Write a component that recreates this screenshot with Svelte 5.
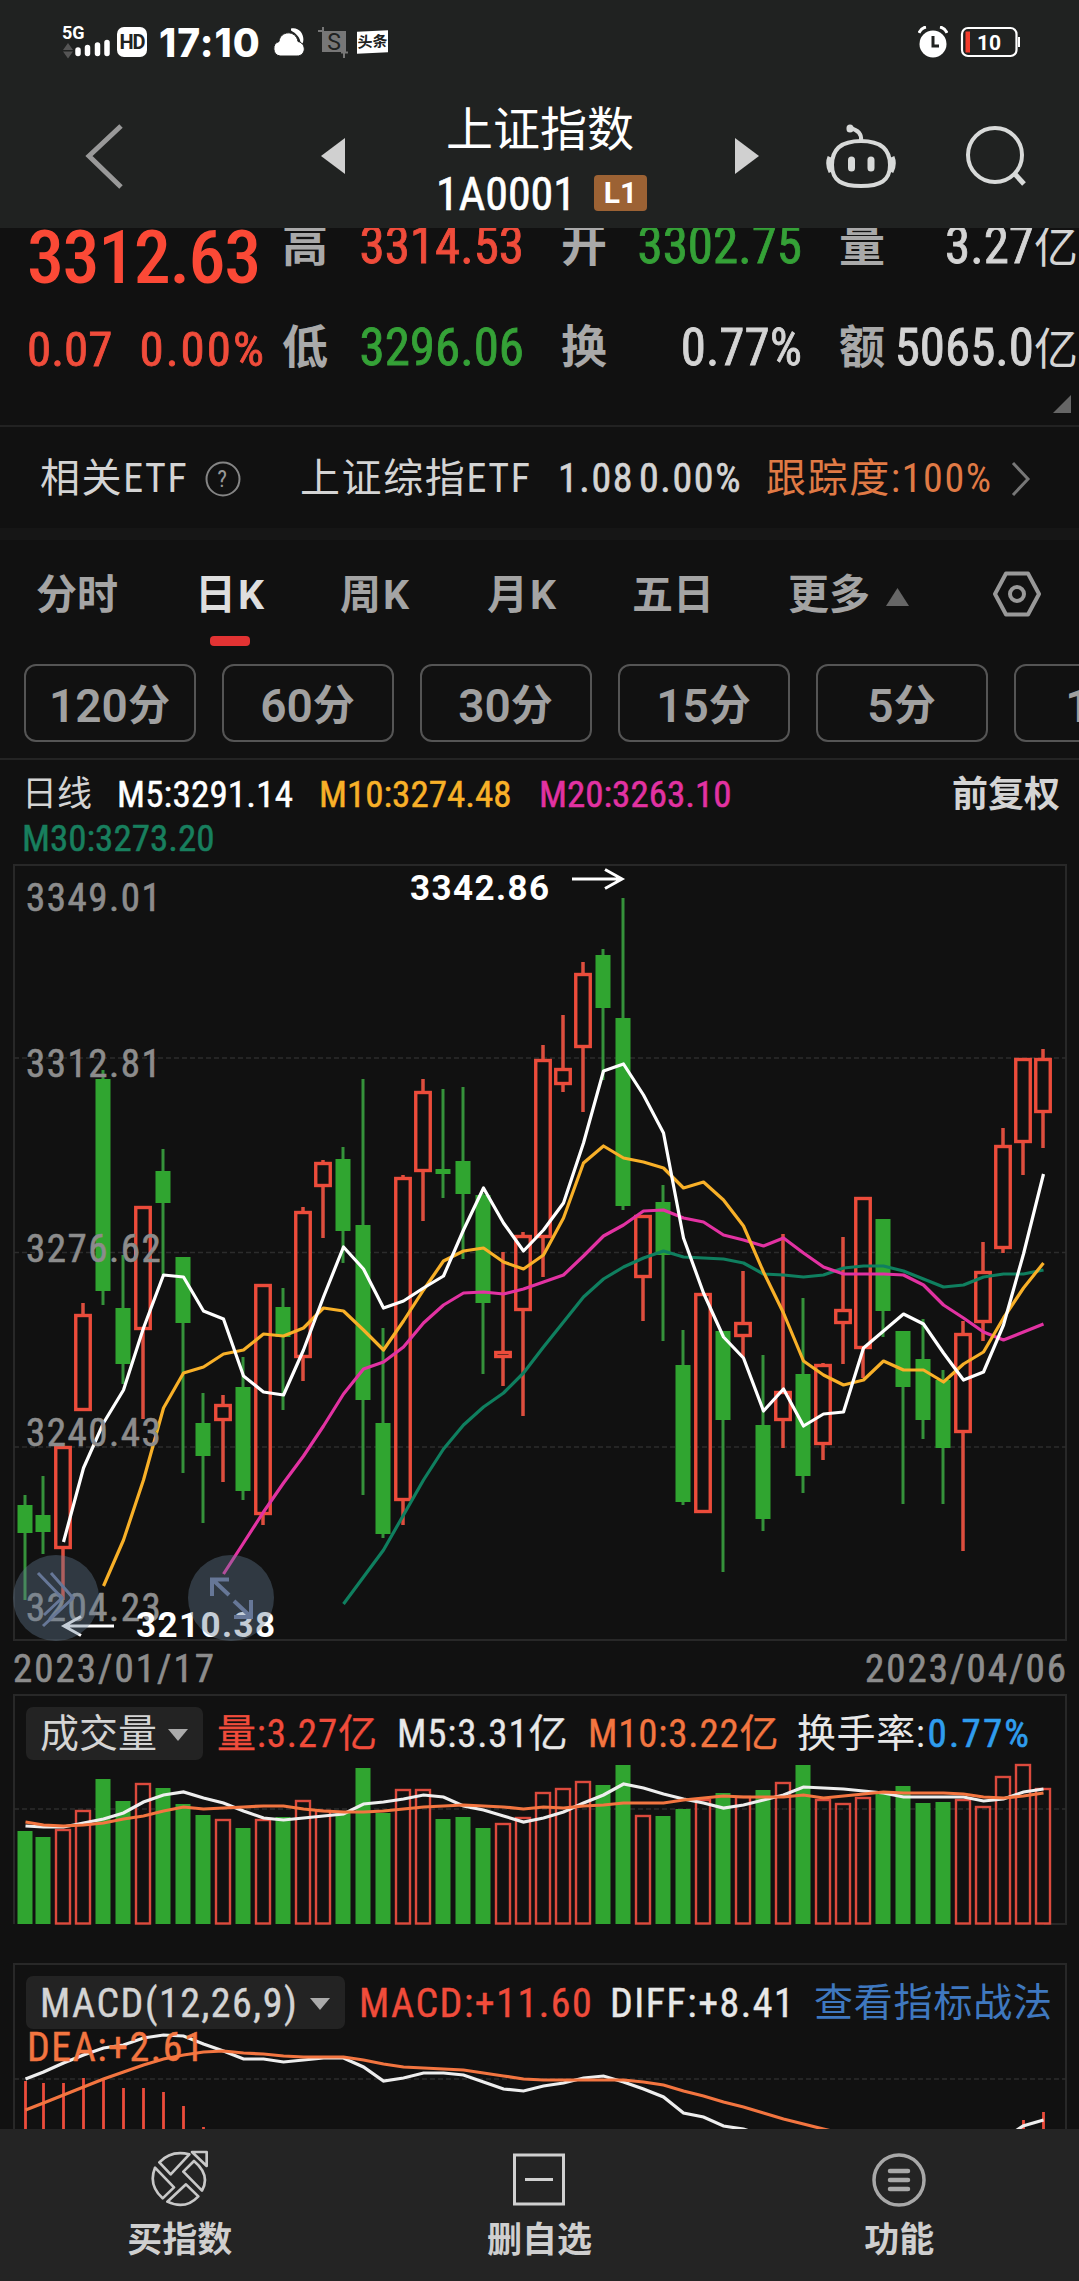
<script>
  const tabs = [
    { name: '分时' },
    { name: '日', k: true, active: true },
    { name: '周', k: true },
    { name: '月', k: true },
    { name: '五日' }
  ];
  const periods = ['120', '60', '30', '15', '5', '1'];

  // [rising, high, body top, body bottom, low]
  const candles = [
    [0, 1495, 1505, 1533, 1600], [0, 1476, 1515, 1532, 1554], [1, 1446, 1446, 1549, 1600],
    [1, 1303, 1314, 1411, 1411], [0, 1070, 1079, 1291, 1305], [0, 1255, 1308, 1364, 1384],
    [1, 1206, 1206, 1330, 1419], [0, 1149, 1171, 1203, 1275], [0, 1257, 1257, 1323, 1473],
    [0, 1393, 1423, 1456, 1523], [1, 1395, 1404, 1421, 1482], [0, 1357, 1387, 1491, 1500],
    [1, 1284, 1284, 1515, 1525], [0, 1288, 1307, 1337, 1410], [1, 1207, 1211, 1358, 1381],
    [1, 1160, 1162, 1187, 1238], [0, 1147, 1159, 1231, 1263], [0, 1079, 1225, 1400, 1495],
    [0, 1328, 1423, 1534, 1538], [1, 1175, 1177, 1501, 1525], [1, 1079, 1091, 1172, 1221],
    [0, 1089, 1169, 1174, 1198], [0, 1087, 1161, 1194, 1259], [0, 1193, 1195, 1303, 1374],
    [1, 1252, 1351, 1358, 1386], [1, 1232, 1235, 1311, 1416], [1, 1045, 1059, 1238, 1277],
    [1, 1015, 1068, 1085, 1092], [1, 962, 973, 1048, 1112], [0, 949, 955, 1008, 1080],
    [0, 898, 1018, 1206, 1210], [1, 1215, 1215, 1278, 1321], [0, 1185, 1202, 1255, 1341],
    [0, 1330, 1365, 1502, 1505], [1, 1293, 1293, 1513, 1513], [0, 1331, 1331, 1420, 1572],
    [1, 1271, 1322, 1337, 1357], [0, 1355, 1425, 1519, 1531], [1, 1234, 1391, 1421, 1448],
    [0, 1298, 1374, 1476, 1493], [1, 1363, 1364, 1445, 1460], [1, 1237, 1309, 1324, 1364],
    [1, 1197, 1197, 1349, 1378], [0, 1219, 1219, 1311, 1337], [0, 1331, 1331, 1387, 1504],
    [0, 1319, 1359, 1420, 1439], [0, 1370, 1380, 1448, 1504], [1, 1321, 1333, 1433, 1551],
    [1, 1242, 1271, 1323, 1341], [1, 1128, 1145, 1249, 1253], [1, 1058, 1058, 1143, 1175],
    [1, 1049, 1058, 1113, 1148]
  ];

  const averages = [
    { color: '#0f7f5f', start: 16, ys: [1604, 1577, 1550, 1515, 1480, 1449, 1425, 1407, 1393, 1373, 1347, 1322, 1297, 1279, 1267, 1258, 1251, 1257, 1258, 1259, 1263, 1274, 1275, 1277, 1275, 1268, 1266, 1266, 1271, 1279, 1287, 1285, 1277, 1274, 1274, 1270] },
    { color: '#e232a2', start: 10, ys: [1574, 1543, 1512, 1483, 1456, 1426, 1394, 1369, 1362, 1347, 1323, 1305, 1293, 1292, 1294, 1289, 1282, 1275, 1256, 1236, 1225, 1211, 1210, 1218, 1222, 1235, 1240, 1246, 1238, 1253, 1267, 1274, 1274, 1274, 1275, 1285, 1305, 1318, 1332, 1340, 1332, 1324] },
    { color: '#f8b028', start: 4, ys: [1586, 1540, 1480, 1408, 1373, 1367, 1354, 1350, 1334, 1336, 1328, 1308, 1311, 1330, 1350, 1321, 1290, 1261, 1251, 1248, 1262, 1269, 1255, 1218, 1163, 1146, 1158, 1162, 1168, 1188, 1182, 1200, 1226, 1272, 1313, 1361, 1375, 1385, 1380, 1361, 1370, 1370, 1382, 1364, 1352, 1318, 1288, 1263] },
    { color: '#ffffff', start: 2, ys: [1542, 1468, 1423, 1390, 1328, 1275, 1277, 1311, 1319, 1376, 1392, 1395, 1350, 1297, 1247, 1269, 1308, 1301, 1288, 1276, 1230, 1188, 1223, 1251, 1230, 1203, 1143, 1071, 1064, 1095, 1133, 1238, 1293, 1337, 1358, 1411, 1389, 1426, 1414, 1412, 1348, 1331, 1314, 1324, 1353, 1380, 1372, 1325, 1254, 1174] }
  ];

  const volumes = [1831, 1837, 1830, 1811, 1779, 1801, 1784, 1788, 1804, 1815, 1820, 1828, 1820, 1817, 1801, 1811, 1813, 1768, 1813, 1790, 1790, 1819, 1817, 1828, 1824, 1818, 1793, 1789, 1782, 1785, 1765, 1816, 1816, 1809, 1800, 1793, 1797, 1790, 1783, 1765, 1800, 1804, 1798, 1793, 1786, 1803, 1802, 1800, 1807, 1777, 1765, 1789];
  const volumeMa5 = [1826, 1827, 1827, 1823, 1819, 1813, 1802, 1795, 1792, 1798, 1803, 1811, 1818, 1820, 1818, 1816, 1814, 1804, 1802, 1799, 1795, 1797, 1806, 1810, 1816, 1822, 1818, 1812, 1803, 1795, 1784, 1788, 1794, 1799, 1803, 1808, 1805, 1800, 1795, 1787, 1788, 1789, 1791, 1793, 1797, 1797, 1797, 1797, 1801, 1799, 1792, 1789];
  const volumeMa10 = [1822, 1825, 1826, 1825, 1823, 1819, 1816, 1811, 1807, 1809, 1808, 1807, 1806, 1806, 1809, 1811, 1812, 1812, 1811, 1809, 1807, 1806, 1805, 1806, 1807, 1809, 1807, 1808, 1806, 1805, 1803, 1803, 1803, 1800, 1798, 1796, 1797, 1797, 1797, 1795, 1798, 1796, 1794, 1792, 1793, 1793, 1793, 1794, 1797, 1798, 1796, 1793];

  const macdBars = [[0, 2081], [1, 2083], [2, 2083], [3, 2078], [4, 2078], [5, 2088], [6, 2088], [7, 2092], [8, 2106], [9, 2127], [50, 2120], [51, 2112]];
  const diff = [2079, 2072, 2063, 2055, 2048, 2045, 2038, 2035, 2036, 2044, 2051, 2059, 2059, 2062, 2060, 2058, 2058, 2067, 2081, 2078, 2073, 2073, 2075, 2082, 2089, 2091, 2086, 2083, 2078, 2076, 2082, 2089, 2097, 2113, 2117, 2126, 2129, 2136];
  const dea = [2110, 2103, 2095, 2087, 2079, 2072, 2065, 2059, 2055, 2052, 2051, 2053, 2054, 2056, 2057, 2057, 2057, 2060, 2064, 2067, 2068, 2069, 2070, 2073, 2076, 2079, 2080, 2080, 2080, 2080, 2080, 2082, 2085, 2091, 2096, 2102, 2107, 2113, 2119, 2124, 2129, 2134];

  const x = (i) => (i === 0 ? 25 : 23 + 20 * i);
  const line = (ys, start = 0) => ys.map((y, i) => `${x(i + start) + 0.5},${y}`).join(' ');
</script>

{#snippet caret()}
  <svg class="caret" width="20" height="12" viewBox="0 0 20 12"><path d="M0 0h20L10 12z" fill="#aaa" /></svg>
{/snippet}

<div class="screen">
  <header>
    <div class="status">
      <svg class="signal" width="48" height="34" viewBox="63 25 48 34">
        <text x="62" y="39" font-size="18" font-weight="700" fill="#fff">5G</text>
        <path d="M63 50l5-7 5 7zM63 51.500h10l-5 7z" fill="#555" />
        <g stroke="#fff" stroke-width="5.500" stroke-linecap="round">
          <path d="M78 50v3.500M87.500 47.500v6M97.500 45v8.500M107 42.500v11" />
        </g>
      </svg>
      <span class="hd">HD</span>
      <span class="clock">17:10</span>
      <svg class="cloud" width="32" height="30" viewBox="272 27 32 30">
        <path d="M290 28.500c8-2 14 6 12 14l-2 2c-1-8-5-11-10-14z" fill="#fff" />
        <path d="M279 56a7.500 7.500 0 0 1-1-14.500c1-11 17-12 19 0 9 2 8 14.500-1 14.500z" fill="#fff" stroke="#202221" stroke-width="1" />
      </svg>
      <svg class="crop" width="30" height="32" viewBox="317 26 30 32">
        <path d="M321 31h24v21h-24z" fill="#777" />
        <path d="M317 31h6M322 27v6M343 50v8M340 52.500h8" stroke="#777" stroke-width="2" />
        <text x="333" y="50" text-anchor="middle" font-size="23" fill="#202221">S</text>
      </svg>
      <span class="news">头条</span>
      <svg class="alarm" width="30" height="32" viewBox="918 26 30 32">
        <circle cx="933" cy="44" r="13.500" fill="#fff" />
        <path d="M919 33q2-5 7-6M947 33q-2-5-7-6" stroke="#fff" stroke-width="3" fill="none" />
        <path d="M933 36v10h6" stroke="#202221" stroke-width="3" fill="none" />
      </svg>
      <svg class="battery" width="60" height="32" viewBox="959 26 60 32">
        <rect x="961" y="28" width="54.500" height="28" rx="6" fill="none" stroke="#fff" stroke-width="2.200" />
        <path d="M964.500 31.500h4.500v21h-4.500z" fill="#f23c2c" />
        <path d="M1018 37v10" stroke="#fff" stroke-width="2" />
        <text x="988" y="49.500" text-anchor="middle" font-size="21" font-weight="700" fill="#fff">10</text>
      </svg>
    </div>
    <nav>
      <svg class="back" width="44" height="66" viewBox="82 123 44 66">
        <path d="M121 126L89 156l32 31" fill="none" stroke="#999" stroke-width="5" />
      </svg>
      <svg width="24" height="36" viewBox="0 0 24 36"><path d="M24 0v36L0 18z" fill="#d0d0d0" /></svg>
      <div class="title">
        <h1>上证指数</h1>
        <p><span>1A0001</span><b>L1</b></p>
      </div>
      <svg width="24" height="36" viewBox="0 0 24 36"><path d="M0 0v36l24-18z" fill="#d0d0d0" /></svg>
      <svg class="robot" width="72" height="66" viewBox="825 121 72 66">
        <g fill="none" stroke="#d8dad9" stroke-width="4">
          <path d="M861 139c21 0 29 9 29 24 0 16-10 21-29 21s-29-5-29-21c0-15 8-24 29-24z" />
          <path d="M861 138q1-9-11-12" stroke-linecap="round" />
          <path d="M850 126v1" stroke-linecap="round" stroke-width="7" />
          <path d="M830 155q-3 7 1 15M892 155q3 7-1 15" stroke-width="5" />
          <path d="M851.500 158v8M871 158v8" stroke-width="7" stroke-linecap="round" />
        </g>
      </svg>
      <svg class="search" width="62" height="64" viewBox="965 124 62 64">
        <circle cx="995" cy="155" r="27" fill="none" stroke="#d8dad9" stroke-width="4" />
        <path d="M1014 173l10 11" stroke="#d8dad9" stroke-width="5" />
      </svg>
    </nav>
  </header>

  <section class="quote">
    <div class="quote-grid">
      <strong>3312.63</strong>
      <div class="cell up"><label>高</label><span>3314.53</span></div>
      <div class="cell down"><label>开</label><span>3302.75</span></div>
      <div class="cell"><label>量</label><span>3.27<i>亿</i></span></div>
      <div class="change"><span>0.07</span><span class="percent">0.00%</span></div>
      <div class="cell down"><label>低</label><span>3296.06</span></div>
      <div class="cell"><label>换</label><span>0.77%</span></div>
      <div class="cell"><label>额</label><span>5065.0<i>亿</i></span></div>
    </div>
    <svg class="corner" width="18" height="18" viewBox="0 0 18 18"><path d="M18 0v18H0z" fill="#666" /></svg>
  </section>

  <section class="etf">
    <span class="etf-label">相关ETF</span>
    <svg class="help" width="38" height="38" viewBox="0 0 38 38">
      <circle cx="19" cy="19" r="16.500" fill="none" stroke="#858585" stroke-width="2" />
      <text x="19" y="27" text-anchor="middle" font-size="23" fill="#999">?</text>
    </svg>
    <span class="etf-name">上证综指ETF</span>
    <span class="etf-price">1.08</span>
    <span class="etf-rate">0.00%</span>
    <span class="track">跟踪度:100%</span>
    <svg class="more" width="20" height="36" viewBox="0 0 20 36"><path d="M2 2l15 16L2 34" fill="none" stroke="#777" stroke-width="3" /></svg>
  </section>

  <section class="tabs">
    {#each tabs as tab}
      <span class="tab" class:active={tab.active}>{tab.name}{#if tab.k}<i class="k">K</i>{/if}</span>
    {/each}
    <span class="tab extra">更多<svg width="23" height="18" viewBox="0 0 23 18"><path d="M11.500 0L23 18H0z" fill="#666" /></svg></span>
    <svg class="settings" width="50" height="48" viewBox="0 0 50 48">
      <path d="M14 3.500h22L47 24 36 44.500H14L3 24z" fill="none" stroke="#999" stroke-width="4" stroke-linejoin="round" />
      <circle cx="25" cy="24" r="7" fill="none" stroke="#999" stroke-width="4" />
    </svg>
  </section>

  <section class="periods">
    {#each periods as p}
      <span class="chip">{p}<i>分</i></span>
    {/each}
  </section>

  <section class="legend">
    <span class="kind">日线</span>
    <span class="m5">M5:3291.14</span>
    <span class="m10">M10:3274.48</span>
    <span class="m20">M20:3263.10</span>
    <span class="adjust">前复权</span>
    <span class="m30">M30:3273.20</span>
  </section>

  <svg class="price" width="1079" height="785" viewBox="0 860 1079 785">
    <rect x="14" y="865" width="1052" height="775" fill="none" stroke="#282828" stroke-width="2" />
    <path d="M14 1058H1066M14 1252.500H1066M14 1447H1066" stroke="#2c2c2c" stroke-width="1.500" stroke-dasharray="5 3" />
    {#each candles as [up, high, top, bottom, low], i}
      <path d="M{x(i)} {high}V{top}M{x(i)} {bottom}V{low}" stroke={up ? '#dd4e3e' : '#35923a'} stroke-width={up ? 3.5 : 3} />
      {#if up}
        <rect x={x(i) - 7.25} y={top + 1.5} width="14.500" height={bottom - top - 3} fill="none" stroke="#ec4c3b" stroke-width="3.400" />
      {:else}
        <rect x={x(i) - 7.5} y={top} width="15" height={bottom - top} fill="#30a530" />
      {/if}
    {/each}
    {#each averages as ma}
      <polyline points={line(ma.ys, ma.start)} fill="none" stroke={ma.color} stroke-width="3.200" stroke-linejoin="round" />
    {/each}
    <g class="scale">
      <text x="26" y="911">3349.01</text>
      <text x="26" y="1077">3312.81</text>
      <text x="26" y="1262">3276.62</text>
      <text x="26" y="1446">3240.43</text>
      <text x="26" y="1621">3204.23</text>
    </g>
    <g class="peak">
      <text x="410" y="900">3342.86</text>
      <text x="136" y="1637">3210.38</text>
      <path d="M572 879h50M605 869.500l17 9.500-17 9.500M114 1626H64M81 1616.500L64 1626l17 9.500" />
    </g>
    <circle cx="56" cy="1598" r="43" fill="#637c92" fill-opacity=".38" />
    <circle cx="231" cy="1598" r="43" fill="#637c92" fill-opacity=".38" />
    <g fill="none" stroke="#667797" stroke-width="3">
      <path d="M38 1573l24 25-18 17M51 1573l22 25-30 28" />
      <path d="M229 1579.500H212V1596M213 1580l16 15M251 1600v17h-17M250 1616l-16-15" stroke-width="4" />
    </g>
  </svg>
  <div class="dates"><span>2023/01/17</span><span>2023/04/06</span></div>

  <section class="panel volume">
    <svg class="plot" width="1079" height="231" viewBox="0 1694 1079 231">
      <path d="M14 1924V1695H1066V1924H1044" fill="none" stroke="#282828" stroke-width="2" />
      <path d="M14 1809H1066" stroke="#2c2c2c" stroke-width="1.500" stroke-dasharray="5 3" />
      {#each volumes as top, i}
        {#if candles[i][0]}
          <rect x={x(i) - 7} y={top} width="14" height={1923.5 - top} fill="none" stroke="#dc4a3d" stroke-width="2.400" />
        {:else}
          <rect x={x(i) - 7.5} y={top} width="15" height={1924 - top} fill="#30a530" />
        {/if}
      {/each}
      <polyline points={line(volumeMa5)} fill="none" stroke="#eee" stroke-width="3.200" />
      <polyline points={line(volumeMa10)} fill="none" stroke="#f37540" stroke-width="3.200" />
    </svg>
    <div class="indicators">
      <span class="picker">成交量{@render caret()}</span>
      <span class="red v1">量:3.27亿</span>
      <span class="v2">M5:3.31亿</span>
      <span class="orange v3">M10:3.22亿</span>
      <span class="v4">换手率:<em>0.77%</em></span>
    </div>
  </section>

  <section class="panel macd">
    <svg class="plot" width="1079" height="166" viewBox="0 1963 1079 166">
      <path d="M14 2140V1964H1066V2140" fill="none" stroke="#282828" stroke-width="2" />
      <path d="M14 2079H1066" stroke="#2c2c2c" stroke-width="1.500" stroke-dasharray="5 3" />
      {#each macdBars as [i, top]}
        <path d="M{x(i) + 0.5} {top}V2140" stroke="#ec4c3b" stroke-width="2.800" />
      {/each}
      <polyline points={line(diff)} fill="none" stroke="#eee" stroke-width="3.200" />
      <path d="M1014 2132L1023 2126 1043.500 2120" fill="none" stroke="#eee" stroke-width="3.200" />
      <polyline points={line(dea)} fill="none" stroke="#f37540" stroke-width="3.200" />
    </svg>
    <div class="indicators">
      <span class="picker">MACD(12,26,9){@render caret()}</span>
      <span class="red d1">MACD:+11.60</span>
      <span class="d2">DIFF:+8.41</span>
      <span class="link">查看指标战法</span>
    </div>
    <div class="orange dea">DEA:+2.61</div>
  </section>

  <footer>
    <div class="action">
      <svg width="60" height="60" viewBox="60 32 180 180">
        <g fill="none" stroke="#c8c8c8" stroke-width="8" stroke-linejoin="round">
          <path d="M88 72Q124 34 178 48L122 108zM192 68L160 100l56 57Q242 110 192 68zM168 138L112 190Q166 216 205 174zM75 88Q54 140 98 180L132 147z" />
          <path d="M186 41h44v42z" />
        </g>
      </svg>
      <span>买指数</span>
    </div>
    <div class="action">
      <svg width="60" height="60" viewBox="0 0 60 60">
        <path d="M5.500 6h49v49h-49zM16 30.500h28" fill="none" stroke="#d0d0d0" stroke-width="3" />
      </svg>
      <span>删自选</span>
    </div>
    <div class="action">
      <svg width="60" height="60" viewBox="0 0 60 60">
        <circle cx="30" cy="31" r="25" fill="none" stroke="#a8a8a8" stroke-width="3.500" />
        <path d="M21 22h18M21 31h18M21 40h18" stroke="#a8a8a8" stroke-width="4.500" stroke-linecap="round" />
      </svg>
      <span>功能</span>
    </div>
  </footer>
</div>

<style>
  :global(body) {
    background: #111;
  }
  .screen {
    width: 1079px;
    height: 2281px;
    overflow: hidden;
    display: flex;
    flex-direction: column;
    background: #111;
    color: #d4d4d4;
    font-family: 'Roboto Condensed', 'Noto Sans CJK SC', sans-serif;
    line-height: 1;
    white-space: nowrap;
  }
  .screen > :global(*) {
    flex: none;
  }
  i,
  em {
    font-style: normal;
  }
  header {
    height: 228px;
    background: #202221;
    color: #fff;
  }
  .status {
    height: 84px;
    display: flex;
    align-items: center;
    padding: 0 59px 0 63px;
    box-sizing: border-box;
  }
  .status text {
    font-family: Roboto, sans-serif;
  }
  .signal {
    overflow: visible;
  }
  .hd {
    width: 30px;
    height: 30px;
    margin-left: 6px;
    border-radius: 7px;
    background: #fff;
    color: #202221;
    font: 700 20px/30px Roboto, sans-serif;
    text-align: center;
    letter-spacing: -1px;
  }
  .clock {
    width: 103px;
    margin-left: 12px;
    font: 800 39px/1 Inter, sans-serif;
    letter-spacing: 1px;
  }
  .cloud {
    margin-left: 11px;
  }
  .crop {
    margin-left: 13px;
  }
  .news {
    margin-left: 9px;
    width: 31px;
    height: 22px;
    background: #fff;
    color: #202221;
    font-size: 15px;
    font-weight: 700;
    line-height: 22px;
    text-align: center;
    transform: skewY(-3deg);
  }
  .alarm {
    margin-left: auto;
  }
  .battery {
    margin-left: 12px;
  }
  nav {
    height: 144px;
    display: flex;
    align-items: center;
    padding-left: 82px;
  }
  .back {
    margin-right: 195px;
  }
  .title {
    width: 390px;
    text-align: center;
  }
  h1 {
    margin: 0;
    padding-top: 11px;
    font-size: 47px;
    font-weight: 400;
    line-height: 62px;
  }
  .title p {
    margin: 0;
    display: flex;
    justify-content: center;
    align-items: center;
    gap: 18px;
    padding-left: 3px;
    font-size: 46px;
    line-height: 62px;
  }
  .title p span {
    padding-top: 2px;
    -webkit-text-stroke: 0.6px;
  }
  .title b {
    width: 53px;
    background: #9c6234;
    border-radius: 4px;
    font: 700 30px/36px Roboto, sans-serif;
  }
  .robot {
    margin-left: 66px;
  }
  .search {
    margin-left: 68px;
  }
  .quote {
    height: 199px;
    box-sizing: border-box;
    border-bottom: 2px solid #222;
    overflow: hidden;
    position: relative;
  }
  .quote-grid {
    display: grid;
    grid-template-columns: 255px 279px 278px 239px;
    grid-auto-rows: 102px;
    align-items: center;
    margin-top: -34px;
    padding-left: 27px;
    font-size: 51px;
  }
  .quote-grid strong {
    padding-top: 25px;
    font-size: 74px;
    font-weight: 500;
    color: #fb4936;
    letter-spacing: -1.4px;
  }
  .cell {
    display: flex;
    justify-content: space-between;
    align-items: center;
    margin-right: 37px;
  }
  .cell:nth-child(4n) {
    margin-right: 0;
  }
  .cell span,
  .change {
    -webkit-text-stroke: 0.8px;
  }
  .cell label {
    font-size: 46px;
    font-weight: 700;
    color: #a9a9a9;
  }
  .cell i {
    font-size: 44px;
    -webkit-text-stroke: 0;
  }
  .up {
    color: #f04c3b;
  }
  .down {
    color: #35a137;
  }
  .change {
    display: flex;
    gap: 27px;
    padding-top: 5px;
    font-size: 49px;
    color: #f04c3b;
  }
  .percent {
    letter-spacing: 2px;
  }
  .corner {
    position: absolute;
    right: 8px;
    bottom: 12px;
  }
  .etf {
    height: 113px;
    box-sizing: border-box;
    border-bottom: 12px solid #161616;
    display: flex;
    align-items: center;
    padding: 2px 0 0 40px;
    font-size: 40px;
    letter-spacing: 1.6px;
  }
  .etf-label {
    width: 164px;
  }
  .etf-name {
    margin-left: 58px;
    width: 258px;
  }
  .etf-price {
    width: 81px;
    -webkit-text-stroke: 0.6px;
  }
  .etf-rate {
    width: 127px;
    -webkit-text-stroke: 0.6px;
  }
  .track {
    width: 245px;
    color: #e07a45;
  }
  .tabs {
    height: 108px;
    position: relative;
    display: grid;
    grid-template-columns: 159px 145px 147px 145px 156px 204px 60px;
    align-items: center;
    padding-left: 36px;
    font-size: 41px;
    font-weight: 700;
    color: #a4a4a4;
  }
  .tab {
    position: relative;
    justify-self: start;
    padding-top: 3px;
  }
  .k {
    display: inline-block;
    margin-left: 2px;
    font-family: Roboto, sans-serif;
  }
  .active {
    color: #dedede;
  }
  .active::after {
    content: '';
    position: absolute;
    left: 50%;
    top: 64px;
    width: 40px;
    height: 10px;
    margin-left: -20px;
    border-radius: 4px;
    background: #e23333;
  }
  .extra svg {
    margin-left: 16px;
    vertical-align: 3px;
  }
  .periods {
    height: 112px;
    box-sizing: border-box;
    border-bottom: 2px solid #242424;
    display: flex;
    gap: 26px;
    padding: 16px 0 0 24px;
    overflow: hidden;
  }
  .chip {
    flex: none;
    width: 172px;
    height: 78px;
    box-sizing: border-box;
    border: 2px solid #555;
    border-radius: 12px;
    display: flex;
    align-items: center;
    justify-content: center;
    padding: 5px 1px 0 0;
    font: 600 46px/1 Roboto, 'Noto Sans CJK SC', sans-serif;
    color: #a0a0a0;
  }
  .chip i {
    font-size: 42px;
    font-weight: 700;
  }
  .legend {
    height: 100px;
    box-sizing: border-box;
    padding: 12px 0 0 22px;
    display: grid;
    grid-template-columns: 95px 202px 220px 413px 110px;
    grid-auto-rows: 44px;
    align-items: center;
    font-size: 37px;
    -webkit-text-stroke: 0.5px;
  }
  .kind {
    font-size: 35px;
    -webkit-text-stroke: 0;
  }
  .m5 {
    color: #fff;
    letter-spacing: 0.2px;
  }
  .m10 {
    color: #f8b028;
  }
  .m20 {
    color: #e232a2;
  }
  .m30 {
    color: #187f5e;
  }
  .adjust {
    padding-top: 2px;
    font-size: 36px;
    font-weight: 700;
    -webkit-text-stroke: 0;
  }
  .price {
    display: block;
  }
  .scale text {
    font-size: 39px;
    letter-spacing: 1.5px;
    fill: #8c8c8c;
    stroke: #8c8c8c;
    stroke-width: 0.6px;
  }
  .peak text {
    font: 700 35px Roboto, sans-serif;
    letter-spacing: 1.4px;
    fill: #fff;
  }
  .peak path {
    fill: none;
    stroke: #fff;
    stroke-width: 3;
  }
  .dates {
    height: 49px;
    display: flex;
    justify-content: space-between;
    align-items: center;
    padding: 0 11px 0 13px;
    font-size: 39px;
    letter-spacing: 2px;
    color: #8c8c8c;
    -webkit-text-stroke: 0.6px;
  }
  .panel {
    position: relative;
  }
  .plot {
    position: absolute;
    left: 0;
    top: 0;
  }
  .volume {
    height: 231px;
    margin-bottom: 38px;
  }
  .macd {
    height: 166px;
  }
  .indicators {
    position: relative;
    display: flex;
    align-items: center;
    padding: 13px 0 0 26px;
    font-size: 39px;
    color: #e8e8e8;
  }
  .indicators > span {
    padding-top: 2px;
  }
  .indicators > .picker {
    box-sizing: border-box;
    height: 53px;
    width: 177px;
    padding: 2px 15px 0 14px;
    display: flex;
    align-items: center;
    justify-content: space-between;
    border-radius: 7px;
    background: #232323;
    color: #d4d4d4;
  }
  .indicators > .v1,
  .indicators > .v2,
  .indicators > .v3 {
    letter-spacing: 0.8px;
    -webkit-text-stroke: 0.3px;
  }
  .macd .indicators,
  .dea {
    font-size: 40px;
    letter-spacing: 1.5px;
    -webkit-text-stroke: 0.4px;
  }
  .macd .indicators > .picker {
    width: 319px;
  }
  .red {
    color: #f04c3b;
  }
  .orange {
    color: #f37540;
  }
  .v1 {
    margin-left: 14px;
    width: 180px;
  }
  .v2 {
    width: 191px;
  }
  .v3 {
    width: 209px;
  }
  .v4 {
    letter-spacing: 0.6px;
  }
  .v4 em {
    margin-left: 2px;
    letter-spacing: 2.2px;
    color: #2f9dee;
    -webkit-text-stroke: 0.6px;
  }
  .d1 {
    margin-left: 14px;
    width: 251px;
  }
  .d2 {
    width: 204px;
  }
  .indicators > .link {
    color: #3f78bf;
    font-size: 39px;
    letter-spacing: 0.8px;
    -webkit-text-stroke: 0;
  }
  .dea {
    position: relative;
    padding: 0 0 0 27px;
    line-height: 37px;
  }
  footer {
    height: 152px;
    display: grid;
    grid-template-columns: repeat(3, 1fr);
    background: #242424;
  }
  .action {
    display: flex;
    flex-direction: column;
    align-items: center;
    padding-top: 20px;
    gap: 14px;
    font-size: 35px;
    font-weight: 700;
    color: #cfcfcf;
  }
</style>
